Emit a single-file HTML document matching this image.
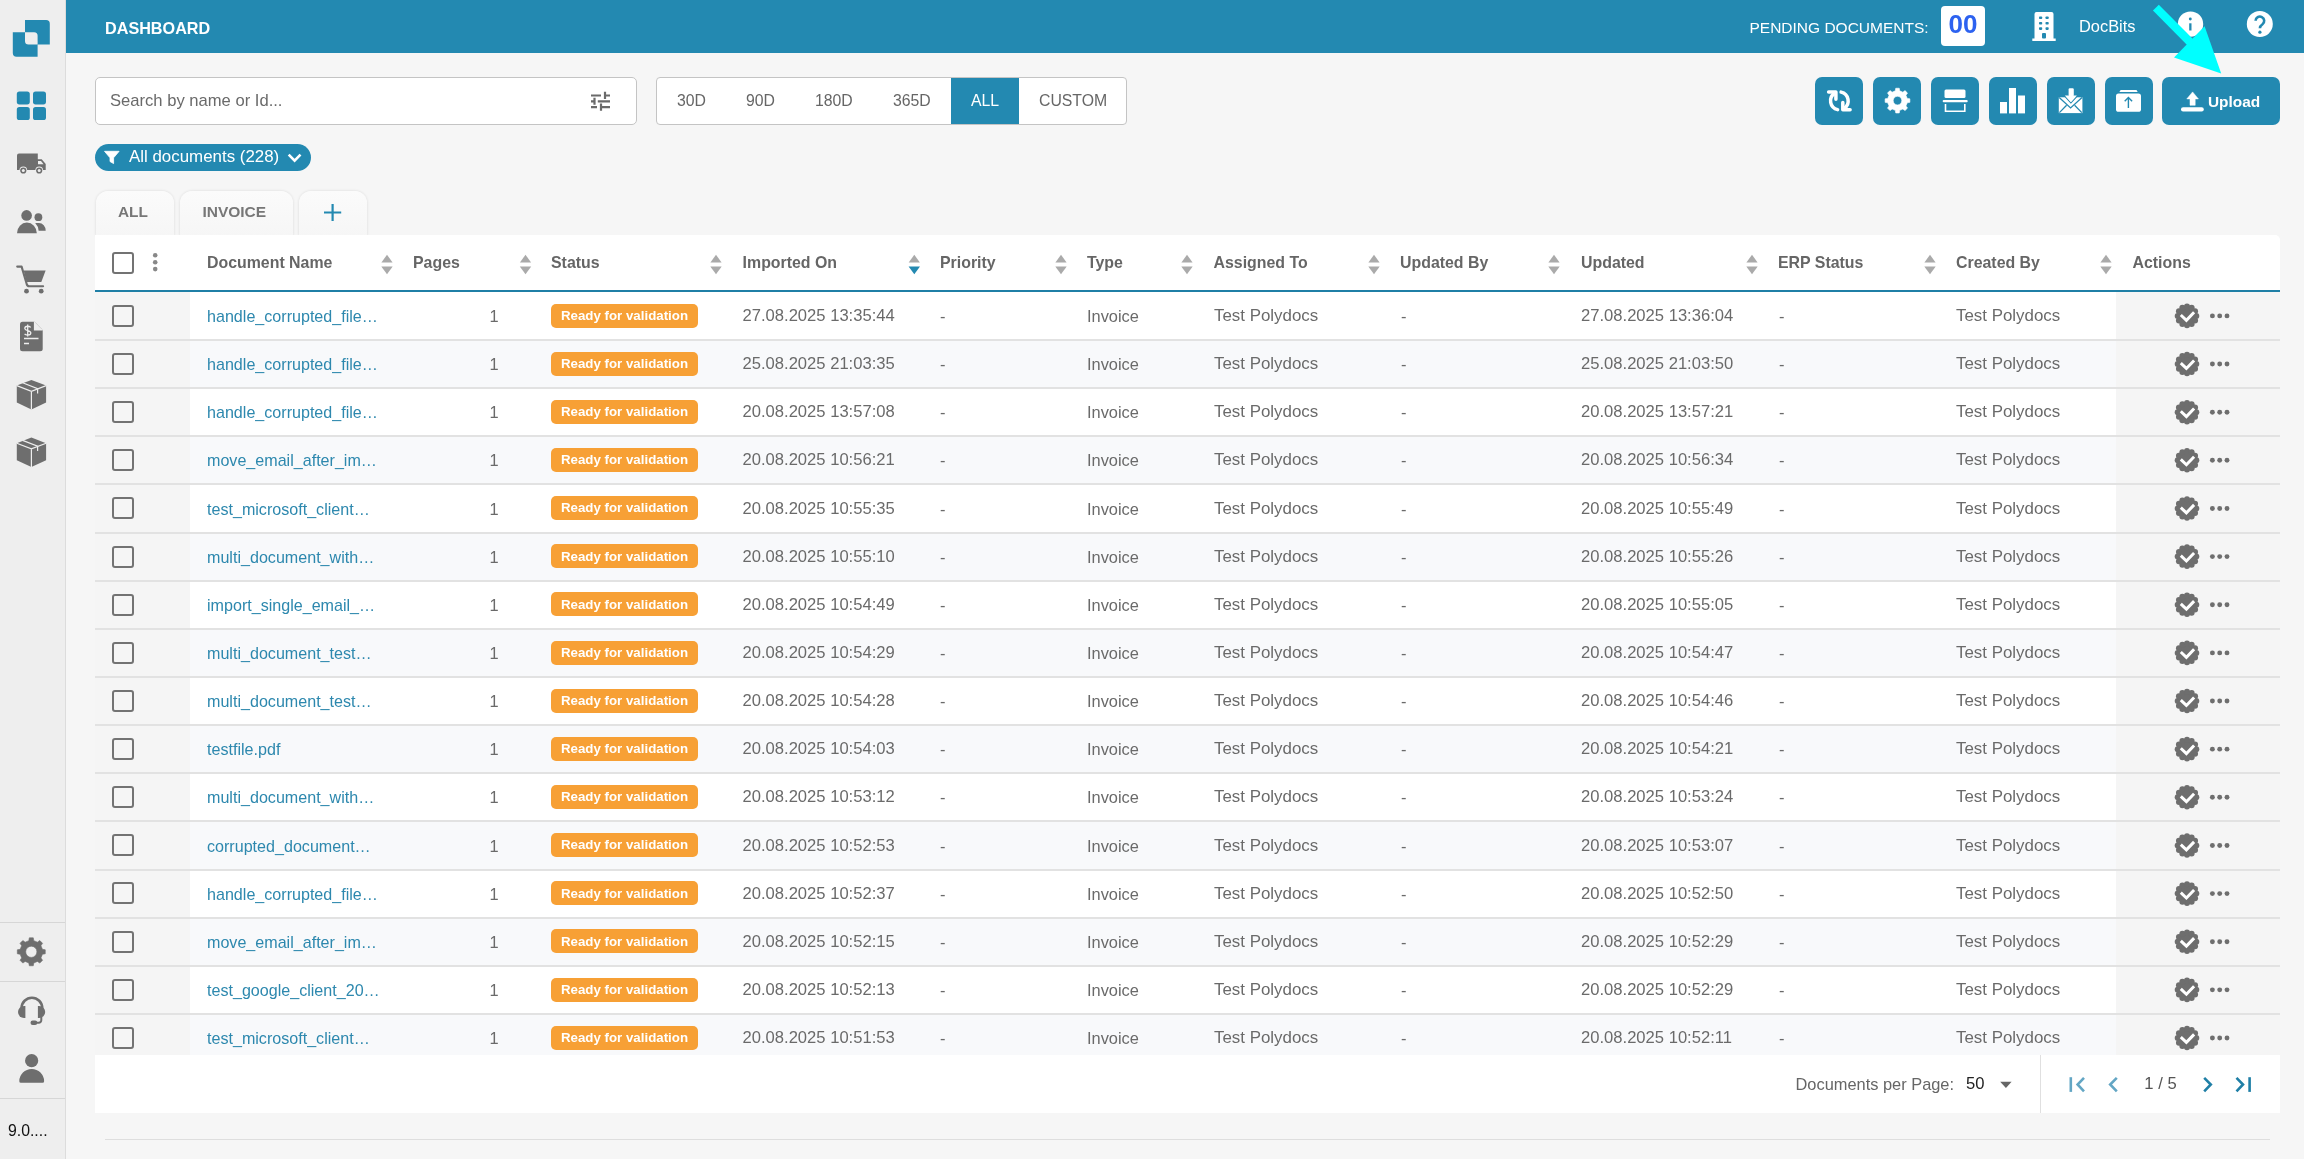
<!DOCTYPE html>
<html><head><meta charset="utf-8"><title>Dashboard</title>
<style>
html,body{margin:0;padding:0;}
body{width:2304px;height:1159px;overflow:hidden;position:relative;background:#f6f6f6;font-family:"Liberation Sans", sans-serif;}
.t{position:absolute;white-space:nowrap;line-height:40px;height:40px;}
svg{position:absolute;left:0;top:0;overflow:visible;}
</style></head><body>
<div style="position:absolute;left:0px;top:0px;width:65px;height:1159px;background:#eeeeee;"></div>
<div style="position:absolute;left:65px;top:0px;width:1px;height:1159px;background:#dcdcdc;"></div>
<div style="position:absolute;left:0px;top:922px;width:65px;height:1.3px;background:#d6d6d6;"></div>
<div style="position:absolute;left:0px;top:981px;width:65px;height:1.3px;background:#d6d6d6;"></div>
<div style="position:absolute;left:0px;top:1098px;width:65px;height:1.3px;background:#d6d6d6;"></div>
<div style="position:absolute;left:66px;top:0px;width:2238px;height:53px;background:#2389b1;"></div>
<div style="position:absolute;left:1941px;top:6px;width:44px;height:40px;background:#fff;border-radius:4px;"></div>
<div style="position:absolute;left:95px;top:77px;width:540px;height:46px;background:#fff;border:1px solid #c4c4c4;border-radius:5px;"></div>
<div style="position:absolute;left:656px;top:77px;width:469px;height:46px;background:#fff;border:1px solid #c4c4c4;border-radius:4px;"></div>
<div style="position:absolute;left:951px;top:78px;width:68px;height:46px;background:#2389b1;"></div>
<div style="position:absolute;left:1815px;top:77px;width:48px;height:48px;background:#2389b1;border-radius:7px;"></div>
<div style="position:absolute;left:1873px;top:77px;width:48px;height:48px;background:#2389b1;border-radius:7px;"></div>
<div style="position:absolute;left:1931px;top:77px;width:48px;height:48px;background:#2389b1;border-radius:7px;"></div>
<div style="position:absolute;left:1989px;top:77px;width:48px;height:48px;background:#2389b1;border-radius:7px;"></div>
<div style="position:absolute;left:2047px;top:77px;width:48px;height:48px;background:#2389b1;border-radius:7px;"></div>
<div style="position:absolute;left:2105px;top:77px;width:48px;height:48px;background:#2389b1;border-radius:7px;"></div>
<div style="position:absolute;left:2162px;top:77px;width:118px;height:48px;background:#2389b1;border-radius:7px;"></div>
<div style="position:absolute;left:95px;top:144px;width:216px;height:27px;background:#2389b1;border-radius:14px;"></div>
<div style="position:absolute;left:96px;top:191px;width:78px;height:45px;background:linear-gradient(#fbfbfb,#f6f6f6);border-radius:12px 12px 0 0;box-shadow:0 0 3px rgba(0,0,0,0.12);"></div>
<div style="position:absolute;left:180px;top:191px;width:113px;height:45px;background:linear-gradient(#fbfbfb,#f6f6f6);border-radius:12px 12px 0 0;box-shadow:0 0 3px rgba(0,0,0,0.12);"></div>
<div style="position:absolute;left:299px;top:191px;width:68px;height:45px;background:linear-gradient(#fbfbfb,#f6f6f6);border-radius:12px 12px 0 0;box-shadow:0 0 3px rgba(0,0,0,0.12);"></div>
<div style="position:absolute;left:95px;top:235px;width:2185px;height:820px;background:#fff;border-radius:0 5px 0 0;"></div>
<div style="position:absolute;left:95px;top:290px;width:2185px;height:2.2px;background:#1f7fa6;"></div>
<div style="position:absolute;left:112px;top:251.5px;width:18px;height:18px;background:transparent;border:2px solid #737373;border-radius:3px;"></div>
<div style="position:absolute;left:95px;top:292px;width:2185px;height:47px;background:#ffffff;"></div>
<div style="position:absolute;left:95px;top:292px;width:95px;height:47px;background:#f5f5f5;"></div>
<div style="position:absolute;left:2116px;top:292px;width:164px;height:47px;background:#f5f5f5;"></div>
<div style="position:absolute;left:95px;top:339px;width:2185px;height:2px;background:#e2e2e2;"></div>
<div style="position:absolute;left:112px;top:304.8px;width:18px;height:18px;background:transparent;border:2px solid #737373;border-radius:3px;"></div>
<div style="position:absolute;left:551px;top:303.6px;width:147px;height:24px;background:#f7a035;border-radius:5px;"></div>
<div style="position:absolute;left:95px;top:341px;width:2185px;height:46px;background:#f8f9fb;"></div>
<div style="position:absolute;left:95px;top:341px;width:95px;height:46px;background:#f5f5f5;"></div>
<div style="position:absolute;left:2116px;top:341px;width:164px;height:46px;background:#f5f5f5;"></div>
<div style="position:absolute;left:95px;top:387px;width:2185px;height:2px;background:#e2e2e2;"></div>
<div style="position:absolute;left:112px;top:352.94px;width:18px;height:18px;background:transparent;border:2px solid #737373;border-radius:3px;"></div>
<div style="position:absolute;left:551px;top:351.74px;width:147px;height:24px;background:#f7a035;border-radius:5px;"></div>
<div style="position:absolute;left:95px;top:389px;width:2185px;height:46px;background:#ffffff;"></div>
<div style="position:absolute;left:95px;top:389px;width:95px;height:46px;background:#f5f5f5;"></div>
<div style="position:absolute;left:2116px;top:389px;width:164px;height:46px;background:#f5f5f5;"></div>
<div style="position:absolute;left:95px;top:435px;width:2185px;height:2px;background:#e2e2e2;"></div>
<div style="position:absolute;left:112px;top:401.08px;width:18px;height:18px;background:transparent;border:2px solid #737373;border-radius:3px;"></div>
<div style="position:absolute;left:551px;top:399.88px;width:147px;height:24px;background:#f7a035;border-radius:5px;"></div>
<div style="position:absolute;left:95px;top:437px;width:2185px;height:46px;background:#f8f9fb;"></div>
<div style="position:absolute;left:95px;top:437px;width:95px;height:46px;background:#f5f5f5;"></div>
<div style="position:absolute;left:2116px;top:437px;width:164px;height:46px;background:#f5f5f5;"></div>
<div style="position:absolute;left:95px;top:483px;width:2185px;height:2px;background:#e2e2e2;"></div>
<div style="position:absolute;left:112px;top:449.22px;width:18px;height:18px;background:transparent;border:2px solid #737373;border-radius:3px;"></div>
<div style="position:absolute;left:551px;top:448.02px;width:147px;height:24px;background:#f7a035;border-radius:5px;"></div>
<div style="position:absolute;left:95px;top:485px;width:2185px;height:47px;background:#ffffff;"></div>
<div style="position:absolute;left:95px;top:485px;width:95px;height:47px;background:#f5f5f5;"></div>
<div style="position:absolute;left:2116px;top:485px;width:164px;height:47px;background:#f5f5f5;"></div>
<div style="position:absolute;left:95px;top:532px;width:2185px;height:2px;background:#e2e2e2;"></div>
<div style="position:absolute;left:112px;top:497.36px;width:18px;height:18px;background:transparent;border:2px solid #737373;border-radius:3px;"></div>
<div style="position:absolute;left:551px;top:496.16px;width:147px;height:24px;background:#f7a035;border-radius:5px;"></div>
<div style="position:absolute;left:95px;top:534px;width:2185px;height:46px;background:#f8f9fb;"></div>
<div style="position:absolute;left:95px;top:534px;width:95px;height:46px;background:#f5f5f5;"></div>
<div style="position:absolute;left:2116px;top:534px;width:164px;height:46px;background:#f5f5f5;"></div>
<div style="position:absolute;left:95px;top:580px;width:2185px;height:2px;background:#e2e2e2;"></div>
<div style="position:absolute;left:112px;top:545.5px;width:18px;height:18px;background:transparent;border:2px solid #737373;border-radius:3px;"></div>
<div style="position:absolute;left:551px;top:544.3px;width:147px;height:24px;background:#f7a035;border-radius:5px;"></div>
<div style="position:absolute;left:95px;top:582px;width:2185px;height:46px;background:#ffffff;"></div>
<div style="position:absolute;left:95px;top:582px;width:95px;height:46px;background:#f5f5f5;"></div>
<div style="position:absolute;left:2116px;top:582px;width:164px;height:46px;background:#f5f5f5;"></div>
<div style="position:absolute;left:95px;top:628px;width:2185px;height:2px;background:#e2e2e2;"></div>
<div style="position:absolute;left:112px;top:593.64px;width:18px;height:18px;background:transparent;border:2px solid #737373;border-radius:3px;"></div>
<div style="position:absolute;left:551px;top:592.44px;width:147px;height:24px;background:#f7a035;border-radius:5px;"></div>
<div style="position:absolute;left:95px;top:630px;width:2185px;height:46px;background:#f8f9fb;"></div>
<div style="position:absolute;left:95px;top:630px;width:95px;height:46px;background:#f5f5f5;"></div>
<div style="position:absolute;left:2116px;top:630px;width:164px;height:46px;background:#f5f5f5;"></div>
<div style="position:absolute;left:95px;top:676px;width:2185px;height:2px;background:#e2e2e2;"></div>
<div style="position:absolute;left:112px;top:641.78px;width:18px;height:18px;background:transparent;border:2px solid #737373;border-radius:3px;"></div>
<div style="position:absolute;left:551px;top:640.58px;width:147px;height:24px;background:#f7a035;border-radius:5px;"></div>
<div style="position:absolute;left:95px;top:678px;width:2185px;height:46px;background:#ffffff;"></div>
<div style="position:absolute;left:95px;top:678px;width:95px;height:46px;background:#f5f5f5;"></div>
<div style="position:absolute;left:2116px;top:678px;width:164px;height:46px;background:#f5f5f5;"></div>
<div style="position:absolute;left:95px;top:724px;width:2185px;height:2px;background:#e2e2e2;"></div>
<div style="position:absolute;left:112px;top:689.92px;width:18px;height:18px;background:transparent;border:2px solid #737373;border-radius:3px;"></div>
<div style="position:absolute;left:551px;top:688.72px;width:147px;height:24px;background:#f7a035;border-radius:5px;"></div>
<div style="position:absolute;left:95px;top:726px;width:2185px;height:46px;background:#f8f9fb;"></div>
<div style="position:absolute;left:95px;top:726px;width:95px;height:46px;background:#f5f5f5;"></div>
<div style="position:absolute;left:2116px;top:726px;width:164px;height:46px;background:#f5f5f5;"></div>
<div style="position:absolute;left:95px;top:772px;width:2185px;height:2px;background:#e2e2e2;"></div>
<div style="position:absolute;left:112px;top:738.06px;width:18px;height:18px;background:transparent;border:2px solid #737373;border-radius:3px;"></div>
<div style="position:absolute;left:551px;top:736.86px;width:147px;height:24px;background:#f7a035;border-radius:5px;"></div>
<div style="position:absolute;left:95px;top:774px;width:2185px;height:46px;background:#ffffff;"></div>
<div style="position:absolute;left:95px;top:774px;width:95px;height:46px;background:#f5f5f5;"></div>
<div style="position:absolute;left:2116px;top:774px;width:164px;height:46px;background:#f5f5f5;"></div>
<div style="position:absolute;left:95px;top:820px;width:2185px;height:2px;background:#e2e2e2;"></div>
<div style="position:absolute;left:112px;top:786.2px;width:18px;height:18px;background:transparent;border:2px solid #737373;border-radius:3px;"></div>
<div style="position:absolute;left:551px;top:785.0px;width:147px;height:24px;background:#f7a035;border-radius:5px;"></div>
<div style="position:absolute;left:95px;top:822px;width:2185px;height:47px;background:#f8f9fb;"></div>
<div style="position:absolute;left:95px;top:822px;width:95px;height:47px;background:#f5f5f5;"></div>
<div style="position:absolute;left:2116px;top:822px;width:164px;height:47px;background:#f5f5f5;"></div>
<div style="position:absolute;left:95px;top:869px;width:2185px;height:2px;background:#e2e2e2;"></div>
<div style="position:absolute;left:112px;top:834.34px;width:18px;height:18px;background:transparent;border:2px solid #737373;border-radius:3px;"></div>
<div style="position:absolute;left:551px;top:833.14px;width:147px;height:24px;background:#f7a035;border-radius:5px;"></div>
<div style="position:absolute;left:95px;top:871px;width:2185px;height:46px;background:#ffffff;"></div>
<div style="position:absolute;left:95px;top:871px;width:95px;height:46px;background:#f5f5f5;"></div>
<div style="position:absolute;left:2116px;top:871px;width:164px;height:46px;background:#f5f5f5;"></div>
<div style="position:absolute;left:95px;top:917px;width:2185px;height:2px;background:#e2e2e2;"></div>
<div style="position:absolute;left:112px;top:882.48px;width:18px;height:18px;background:transparent;border:2px solid #737373;border-radius:3px;"></div>
<div style="position:absolute;left:551px;top:881.28px;width:147px;height:24px;background:#f7a035;border-radius:5px;"></div>
<div style="position:absolute;left:95px;top:919px;width:2185px;height:46px;background:#f8f9fb;"></div>
<div style="position:absolute;left:95px;top:919px;width:95px;height:46px;background:#f5f5f5;"></div>
<div style="position:absolute;left:2116px;top:919px;width:164px;height:46px;background:#f5f5f5;"></div>
<div style="position:absolute;left:95px;top:965px;width:2185px;height:2px;background:#e2e2e2;"></div>
<div style="position:absolute;left:112px;top:930.62px;width:18px;height:18px;background:transparent;border:2px solid #737373;border-radius:3px;"></div>
<div style="position:absolute;left:551px;top:929.42px;width:147px;height:24px;background:#f7a035;border-radius:5px;"></div>
<div style="position:absolute;left:95px;top:967px;width:2185px;height:46px;background:#ffffff;"></div>
<div style="position:absolute;left:95px;top:967px;width:95px;height:46px;background:#f5f5f5;"></div>
<div style="position:absolute;left:2116px;top:967px;width:164px;height:46px;background:#f5f5f5;"></div>
<div style="position:absolute;left:95px;top:1013px;width:2185px;height:2px;background:#e2e2e2;"></div>
<div style="position:absolute;left:112px;top:978.76px;width:18px;height:18px;background:transparent;border:2px solid #737373;border-radius:3px;"></div>
<div style="position:absolute;left:551px;top:977.56px;width:147px;height:24px;background:#f7a035;border-radius:5px;"></div>
<div style="position:absolute;left:95px;top:1015px;width:2185px;height:40px;background:#f8f9fb;"></div>
<div style="position:absolute;left:95px;top:1015px;width:95px;height:40px;background:#f5f5f5;"></div>
<div style="position:absolute;left:2116px;top:1015px;width:164px;height:40px;background:#f5f5f5;"></div>
<div style="position:absolute;left:112px;top:1026.9px;width:18px;height:18px;background:transparent;border:2px solid #737373;border-radius:3px;"></div>
<div style="position:absolute;left:551px;top:1025.7px;width:147px;height:24px;background:#f7a035;border-radius:5px;"></div>
<div style="position:absolute;left:95px;top:1055px;width:2185px;height:58px;background:#fff;"></div>
<div style="position:absolute;left:2040px;top:1055px;width:1.2px;height:58px;background:#e0e0e0;"></div>
<div style="position:absolute;left:105px;top:1138.5px;width:2165px;height:1.5px;background:#dedede;"></div>
<svg width="2304" height="1159" viewBox="0 0 2304 1159">
<path d="M25,20 H46.1 A3.7,3.7 0 0 1 49.8,23.7 V44.6 H25 Z" fill="#2389b1" />
<path d="M12.8,32.2 H37.6 V56.7 H16.5 A3.7,3.7 0 0 1 12.8,53 Z" fill="#2389b1" />
<path d="M25,32.2 H34.1 A3.5,3.5 0 0 1 37.6,35.7 V44.6 H28.5 A3.5,3.5 0 0 1 25,41.1 Z" fill="#eeeeee" />
<rect x="16.8" y="91.4" width="13" height="13" rx="2.6" fill="#2389b1"/>
<rect x="33" y="91.4" width="13" height="13" rx="2.6" fill="#2389b1"/>
<rect x="16.8" y="107.1" width="13" height="13" rx="2.6" fill="#2389b1"/>
<rect x="33" y="107.1" width="13" height="13" rx="2.6" fill="#2389b1"/>
<path d="M19,153.5 H37.8 V159.2 H41.7 L45.7,164 V170.1 H17 V155.5 A2,2 0 0 1 19,153.5 Z" fill="#6e6e6e" />
<path d="M38,161 H41 L43.5,164.2 H38 Z" fill="#eeeeee" />
<circle cx="23.3" cy="170.5" r="3.9" fill="#eeeeee"/>
<circle cx="23.3" cy="170.5" r="3.1" fill="#6e6e6e"/>
<circle cx="23.3" cy="170.5" r="1.5" fill="#eeeeee"/>
<circle cx="39.2" cy="170.5" r="3.9" fill="#eeeeee"/>
<circle cx="39.2" cy="170.5" r="3.1" fill="#6e6e6e"/>
<circle cx="39.2" cy="170.5" r="1.5" fill="#eeeeee"/>
<circle cx="26.6" cy="215.4" r="5.3" fill="#6e6e6e"/>
<path d="M17,233.2 A9.9,10.7 0 0 1 36.8,233.2 Z" fill="#6e6e6e" />
<circle cx="38.4" cy="217.2" r="3.9" fill="#6e6e6e"/>
<path d="M35.2,223 H39 A6.7,7.7 0 0 1 45.7,230.7 H38.6 A12,12 0 0 0 35.2,223 Z" fill="#6e6e6e" />
<path d="M17.2,266.6 H21.6 L26.7,284 Q27,286.2 29.5,286.2 H43.1" fill="none" stroke="#6e6e6e" stroke-width="2.1" stroke-linecap="round" stroke-linejoin="round"/>
<path d="M23.7,270.4 H45.6 L41.3,282.1 H26.5 Z" fill="#6e6e6e" />
<circle cx="26.5" cy="291.2" r="2.4" fill="#6e6e6e"/>
<circle cx="41.2" cy="291.2" r="2.4" fill="#6e6e6e"/>
<path d="M22.5,321.7 H34.5 L42.7,329.9 V348.7 A2.5,2.5 0 0 1 40.2,351.2 H22.5 A2.5,2.5 0 0 1 20,348.7 V324.2 A2.5,2.5 0 0 1 22.5,321.7 Z" fill="#6e6e6e" />
<path d="M34.5,321.7 V329.9 H42.7" fill="#eeeeee" stroke="#eeeeee" stroke-width="1.2" />
<path d="M24,338.5 H38.5 M24,343.5 H29" fill="none" stroke="#eeeeee" stroke-width="1.4" />
<path d="M30.6,327.4 C30,325.8 24.8,325.6 24.8,328.4 C24.8,331 30.8,330.2 30.8,333 C30.8,335.6 25.6,335.4 24.6,333.8 M27.7,324.4 V336.6" fill="none" stroke="#eeeeee" stroke-width="1.3" />
<path d="M31.4,380.0 L46.1,385.6 V402.6 L31.4,409.4 L16.8,402.6 V385.6 Z" fill="#6e6e6e" />
<path d="M16.8,385.6 L31.4,391.3 L46.1,385.6 M31.4,391.3 V409.4" fill="none" stroke="#eeeeee" stroke-width="1.2" />
<path d="M22.6,382.8 L37.6,388.6 V393.5" fill="none" stroke="#eeeeee" stroke-width="1.2" />
<path d="M31.4,437.6 L46.1,443.20000000000005 V460.20000000000005 L31.4,467.0 L16.8,460.20000000000005 V443.20000000000005 Z" fill="#6e6e6e" />
<path d="M16.8,443.20000000000005 L31.4,448.90000000000003 L46.1,443.20000000000005 M31.4,448.90000000000003 V467.0" fill="none" stroke="#eeeeee" stroke-width="1.2" />
<path d="M22.6,440.40000000000003 L37.6,446.20000000000005 V451.1" fill="none" stroke="#eeeeee" stroke-width="1.2" />
<path d="M28.81,940.67 L29.31,937.84 L33.29,937.84 L33.79,940.67 L37.41,942.17 L39.77,940.52 L42.58,943.33 L40.93,945.69 L42.43,949.31 L45.26,949.81 L45.26,953.79 L42.43,954.29 L40.93,957.91 L42.58,960.27 L39.77,963.08 L37.41,961.43 L33.79,962.93 L33.29,965.76 L29.31,965.76 L28.81,962.93 L25.19,961.43 L22.83,963.08 L20.02,960.27 L21.67,957.91 L20.17,954.29 L17.34,953.79 L17.34,949.81 L20.17,949.31 L21.67,945.69 L20.02,943.33 L22.83,940.52 L25.19,942.17 Z M36.90,951.80 A5.6,5.6 0 1 0 25.70,951.80 A5.6,5.6 0 1 0 36.90,951.80 Z" fill="#6e6e6e" fill-rule="evenodd" stroke="#6e6e6e" stroke-width="0.6" stroke-linejoin="round"/>
<path d="M21.6,1011 V1008 A10.3,10.3 0 0 1 42.2,1008 V1011" fill="none" stroke="#6e6e6e" stroke-width="2.6" />
<path d="M25.4,1006 V1018 H24 A6,6 0 0 1 18,1012 A6,6 0 0 1 24,1006 Z" fill="#6e6e6e" />
<path d="M37.9,1006 V1018 H39.2 A6,6 0 0 0 45.2,1012 A6,6 0 0 0 39.2,1006 Z" fill="#6e6e6e" />
<path d="M41.3,1017 V1020.3 A2.5,2.5 0 0 1 38.8,1022.8 H35" fill="none" stroke="#6e6e6e" stroke-width="2" />
<rect x="30.5" y="1020.6" width="6.8" height="4.4" rx="2.2" fill="#6e6e6e"/>
<circle cx="31.65" cy="1060.7" r="6.6" fill="#6e6e6e"/>
<path d="M19.3,1081.2 A12.4,12.2 0 0 1 44.1,1081.2 A1.5,1.5 0 0 1 42.6,1082.7 H20.8 A1.5,1.5 0 0 1 19.3,1081.2 Z" fill="#6e6e6e" />
<path d="M2034.5,14.1 A2,2 0 0 1 2036.5,12.1 H2051.5 A2,2 0 0 1 2053.5,14.1 V38.5 H2055.7 V41.1 H2032.3 V38.5 H2034.5 Z" fill="#fff" />
<rect x="2039.0" y="16.5" width="3.2" height="2.6" rx="0.8" fill="#2389b1"/>
<rect x="2045.5" y="16.5" width="3.2" height="2.6" rx="0.8" fill="#2389b1"/>
<rect x="2039.0" y="21.9" width="3.2" height="2.6" rx="0.8" fill="#2389b1"/>
<rect x="2045.5" y="21.9" width="3.2" height="2.6" rx="0.8" fill="#2389b1"/>
<rect x="2039.0" y="27.3" width="3.2" height="2.6" rx="0.8" fill="#2389b1"/>
<rect x="2045.5" y="27.3" width="3.2" height="2.6" rx="0.8" fill="#2389b1"/>
<rect x="2042" y="33" width="4" height="5.6" rx="1" fill="#2389b1"/>
<circle cx="2190.5" cy="24.1" r="12.7" fill="#fff"/>
<circle cx="2190.3" cy="19" r="1.45" fill="#2389b1"/>
<rect x="2189.2" y="23.3" width="2.3" height="7.2" fill="#2389b1"/>
<circle cx="2259.8" cy="24" r="13" fill="#fff"/>
<path d="M2255.6,20.8 A4.3,4.3 0 1 1 2262.5,24.3 C2260.6,25.6 2259.9,26.3 2259.9,28.3" fill="none" stroke="#2389b1" stroke-width="2.6" stroke-linecap="butt"/>
<circle cx="2259.9" cy="32.2" r="1.6" fill="#2389b1"/>
<path d="M591,95.5 H601 M605,95.5 H610 M605,91.8 V99 M591,101.3 H594.5 M597.8,101.3 H610 M594.5,97.8 V104.8 M591,107.2 H597 M601,107.2 H610 M601,103.6 V110.8" fill="none" stroke="#6a6a6a" stroke-width="2.2" />
<g fill="none" stroke="#fff" stroke-width="3.5" stroke-linecap="round" stroke-linejoin="round"><path d="M1828.6,92 H1835.9 V99.3"/><path d="M1834.6,93.3 A9,9 0 0 0 1837.6,109.6"/><g transform="rotate(180 1839.35 100.85)"><path d="M1828.6,92 H1835.9 V99.3"/><path d="M1834.6,93.3 A9,9 0 0 0 1837.6,109.6"/></g></g>
<path d="M1895.32,90.84 L1895.74,88.22 L1899.26,88.22 L1899.68,90.84 L1902.86,92.16 L1905.01,90.60 L1907.50,93.09 L1905.94,95.24 L1907.26,98.42 L1909.88,98.84 L1909.88,102.36 L1907.26,102.78 L1905.94,105.96 L1907.50,108.11 L1905.01,110.60 L1902.86,109.04 L1899.68,110.36 L1899.26,112.98 L1895.74,112.98 L1895.32,110.36 L1892.14,109.04 L1889.99,110.60 L1887.50,108.11 L1889.06,105.96 L1887.74,102.78 L1885.12,102.36 L1885.12,98.84 L1887.74,98.42 L1889.06,95.24 L1887.50,93.09 L1889.99,90.60 L1892.14,92.16 Z M1901.80,100.60 A4.3,4.3 0 1 0 1893.20,100.60 A4.3,4.3 0 1 0 1901.80,100.60 Z" fill="#fff" fill-rule="evenodd" stroke="#fff" stroke-width="0.6" stroke-linejoin="round"/>
<rect x="1944.5" y="89.5" width="21" height="8.5" rx="1.5" fill="#fff"/>
<rect x="1942.7" y="100" width="25" height="2.2" rx="1" fill="#fff"/>
<path d="M1945.5,104 V111.2 H1964.8 V104" fill="none" stroke="#fff" stroke-width="1.6" />
<rect x="2000" y="102" width="7" height="11.4" fill="#fff"/>
<rect x="2009" y="88" width="7" height="25.4" fill="#fff"/>
<rect x="2018" y="95.5" width="7" height="17.9" fill="#fff"/>
<rect x="2058.8" y="97.3" width="23.6" height="15.8" fill="#fff"/>
<path d="M2058.8,97.3 L2064.5,97.3 L2070.6,103 L2076.8,97.3 L2082.4,97.3 Z" fill="#fff" />
<path d="M2059.2,97.6 L2070.6,107.9 L2082,97.6" fill="none" stroke="#2389b1" stroke-width="1.3" />
<path d="M2059.4,112.6 L2066.6,105.3 M2081.8,112.6 L2074.6,105.3" fill="none" stroke="#2389b1" stroke-width="1.3" />
<path d="M2064.2,95.6 L2070.9,102.9 L2077.6,95.6" fill="none" stroke="#2389b1" stroke-width="1.3" />
<rect x="2068.6" y="88.3" width="5.2" height="8" rx="1.2" fill="#fff"/>
<path d="M2064.8,95.5 H2076.9 L2070.9,102.2 Z" fill="#fff" />
<path d="M2119.4,92 L2120.6,90 H2136.5 L2137.7,92 Z" fill="#fff" />
<rect x="2116" y="93.4" width="25" height="18.4" rx="2.6" fill="#fff"/>
<path d="M2128.4,108 V97.6 M2124.7,101.2 L2128.4,97.4 L2132.1,101.2" fill="none" stroke="#2389b1" stroke-width="1.4" />
<path d="M2192.6,91.9 L2198.4,98.9 H2195.2 V105.3 H2190 V98.9 H2186.8 Z" fill="#fff" stroke="#fff" stroke-width="0.5" stroke-linejoin="round"/>
<rect x="2181" y="107.2" width="22.8" height="4.3" rx="2.1" fill="#fff"/>
<path d="M104.5,151.3 H119.1 L113.6,157.8 V163.6 L110,161.5 V157.8 Z" fill="#fff" stroke="#fff" stroke-width="0.8" stroke-linejoin="round"/>
<path d="M288.7,154.6 L294.6,160.6 L300.5,154.6" fill="none" stroke="#fff" stroke-width="2.6" />
<path d="M332.6,204 V221 M324,212.5 H341.2" fill="none" stroke="#2389b1" stroke-width="2.2" />
<circle cx="155.2" cy="255.3" r="2.3" fill="#888"/>
<circle cx="155.2" cy="262.2" r="2.3" fill="#888"/>
<circle cx="155.2" cy="269.1" r="2.3" fill="#888"/>
<path d="M387,254.8 L392.6,262.4 H381.4 Z" fill="#aaaaaa" />
<path d="M381.3,266.5 H392.7 L387,274.3 Z" fill="#aaaaaa" />
<path d="M525.5,254.8 L531.1,262.4 H519.9 Z" fill="#aaaaaa" />
<path d="M519.8,266.5 H531.2 L525.5,274.3 Z" fill="#aaaaaa" />
<path d="M716,254.8 L721.6,262.4 H710.4 Z" fill="#aaaaaa" />
<path d="M710.3,266.5 H721.7 L716,274.3 Z" fill="#aaaaaa" />
<path d="M914.3,254.8 L919.9,262.4 H908.6999999999999 Z" fill="#aaaaaa" />
<path d="M908.5999999999999,266.5 H920.0 L914.3,274.3 Z" fill="#2389b1" />
<path d="M1061,254.8 L1066.6,262.4 H1055.4 Z" fill="#aaaaaa" />
<path d="M1055.3,266.5 H1066.7 L1061,274.3 Z" fill="#aaaaaa" />
<path d="M1187,254.8 L1192.6,262.4 H1181.4 Z" fill="#aaaaaa" />
<path d="M1181.3,266.5 H1192.7 L1187,274.3 Z" fill="#aaaaaa" />
<path d="M1374,254.8 L1379.6,262.4 H1368.4 Z" fill="#aaaaaa" />
<path d="M1368.3,266.5 H1379.7 L1374,274.3 Z" fill="#aaaaaa" />
<path d="M1554,254.8 L1559.6,262.4 H1548.4 Z" fill="#aaaaaa" />
<path d="M1548.3,266.5 H1559.7 L1554,274.3 Z" fill="#aaaaaa" />
<path d="M1752,254.8 L1757.6,262.4 H1746.4 Z" fill="#aaaaaa" />
<path d="M1746.3,266.5 H1757.7 L1752,274.3 Z" fill="#aaaaaa" />
<path d="M1930,254.8 L1935.6,262.4 H1924.4 Z" fill="#aaaaaa" />
<path d="M1924.3,266.5 H1935.7 L1930,274.3 Z" fill="#aaaaaa" />
<path d="M2106,254.8 L2111.6,262.4 H2100.4 Z" fill="#aaaaaa" />
<path d="M2100.3,266.5 H2111.7 L2106,274.3 Z" fill="#aaaaaa" />
<g transform="translate(0,0.00)"><g fill="#6e6e6e"><circle cx="2187" cy="315.9" r="10.2"/><circle cx="2196.30" cy="315.90" r="3"/><circle cx="2195.05" cy="320.55" r="3"/><circle cx="2191.65" cy="323.95" r="3"/><circle cx="2187.00" cy="325.20" r="3"/><circle cx="2182.35" cy="323.95" r="3"/><circle cx="2178.95" cy="320.55" r="3"/><circle cx="2177.70" cy="315.90" r="3"/><circle cx="2178.95" cy="311.25" r="3"/><circle cx="2182.35" cy="307.85" r="3"/><circle cx="2187.00" cy="306.60" r="3"/><circle cx="2191.65" cy="307.85" r="3"/><circle cx="2195.05" cy="311.25" r="3"/></g><path d="M2180.8,315 L2186.4,320.3 L2194.1,312.3" fill="none" stroke="#fff" stroke-width="3"/><circle cx="2212.4" cy="315.9" r="2.45" fill="#6e6e6e"/><circle cx="2219.7" cy="315.9" r="2.45" fill="#6e6e6e"/><circle cx="2227" cy="315.9" r="2.45" fill="#6e6e6e"/></g>
<g transform="translate(0,48.14)"><g fill="#6e6e6e"><circle cx="2187" cy="315.9" r="10.2"/><circle cx="2196.30" cy="315.90" r="3"/><circle cx="2195.05" cy="320.55" r="3"/><circle cx="2191.65" cy="323.95" r="3"/><circle cx="2187.00" cy="325.20" r="3"/><circle cx="2182.35" cy="323.95" r="3"/><circle cx="2178.95" cy="320.55" r="3"/><circle cx="2177.70" cy="315.90" r="3"/><circle cx="2178.95" cy="311.25" r="3"/><circle cx="2182.35" cy="307.85" r="3"/><circle cx="2187.00" cy="306.60" r="3"/><circle cx="2191.65" cy="307.85" r="3"/><circle cx="2195.05" cy="311.25" r="3"/></g><path d="M2180.8,315 L2186.4,320.3 L2194.1,312.3" fill="none" stroke="#fff" stroke-width="3"/><circle cx="2212.4" cy="315.9" r="2.45" fill="#6e6e6e"/><circle cx="2219.7" cy="315.9" r="2.45" fill="#6e6e6e"/><circle cx="2227" cy="315.9" r="2.45" fill="#6e6e6e"/></g>
<g transform="translate(0,96.28)"><g fill="#6e6e6e"><circle cx="2187" cy="315.9" r="10.2"/><circle cx="2196.30" cy="315.90" r="3"/><circle cx="2195.05" cy="320.55" r="3"/><circle cx="2191.65" cy="323.95" r="3"/><circle cx="2187.00" cy="325.20" r="3"/><circle cx="2182.35" cy="323.95" r="3"/><circle cx="2178.95" cy="320.55" r="3"/><circle cx="2177.70" cy="315.90" r="3"/><circle cx="2178.95" cy="311.25" r="3"/><circle cx="2182.35" cy="307.85" r="3"/><circle cx="2187.00" cy="306.60" r="3"/><circle cx="2191.65" cy="307.85" r="3"/><circle cx="2195.05" cy="311.25" r="3"/></g><path d="M2180.8,315 L2186.4,320.3 L2194.1,312.3" fill="none" stroke="#fff" stroke-width="3"/><circle cx="2212.4" cy="315.9" r="2.45" fill="#6e6e6e"/><circle cx="2219.7" cy="315.9" r="2.45" fill="#6e6e6e"/><circle cx="2227" cy="315.9" r="2.45" fill="#6e6e6e"/></g>
<g transform="translate(0,144.42)"><g fill="#6e6e6e"><circle cx="2187" cy="315.9" r="10.2"/><circle cx="2196.30" cy="315.90" r="3"/><circle cx="2195.05" cy="320.55" r="3"/><circle cx="2191.65" cy="323.95" r="3"/><circle cx="2187.00" cy="325.20" r="3"/><circle cx="2182.35" cy="323.95" r="3"/><circle cx="2178.95" cy="320.55" r="3"/><circle cx="2177.70" cy="315.90" r="3"/><circle cx="2178.95" cy="311.25" r="3"/><circle cx="2182.35" cy="307.85" r="3"/><circle cx="2187.00" cy="306.60" r="3"/><circle cx="2191.65" cy="307.85" r="3"/><circle cx="2195.05" cy="311.25" r="3"/></g><path d="M2180.8,315 L2186.4,320.3 L2194.1,312.3" fill="none" stroke="#fff" stroke-width="3"/><circle cx="2212.4" cy="315.9" r="2.45" fill="#6e6e6e"/><circle cx="2219.7" cy="315.9" r="2.45" fill="#6e6e6e"/><circle cx="2227" cy="315.9" r="2.45" fill="#6e6e6e"/></g>
<g transform="translate(0,192.56)"><g fill="#6e6e6e"><circle cx="2187" cy="315.9" r="10.2"/><circle cx="2196.30" cy="315.90" r="3"/><circle cx="2195.05" cy="320.55" r="3"/><circle cx="2191.65" cy="323.95" r="3"/><circle cx="2187.00" cy="325.20" r="3"/><circle cx="2182.35" cy="323.95" r="3"/><circle cx="2178.95" cy="320.55" r="3"/><circle cx="2177.70" cy="315.90" r="3"/><circle cx="2178.95" cy="311.25" r="3"/><circle cx="2182.35" cy="307.85" r="3"/><circle cx="2187.00" cy="306.60" r="3"/><circle cx="2191.65" cy="307.85" r="3"/><circle cx="2195.05" cy="311.25" r="3"/></g><path d="M2180.8,315 L2186.4,320.3 L2194.1,312.3" fill="none" stroke="#fff" stroke-width="3"/><circle cx="2212.4" cy="315.9" r="2.45" fill="#6e6e6e"/><circle cx="2219.7" cy="315.9" r="2.45" fill="#6e6e6e"/><circle cx="2227" cy="315.9" r="2.45" fill="#6e6e6e"/></g>
<g transform="translate(0,240.70)"><g fill="#6e6e6e"><circle cx="2187" cy="315.9" r="10.2"/><circle cx="2196.30" cy="315.90" r="3"/><circle cx="2195.05" cy="320.55" r="3"/><circle cx="2191.65" cy="323.95" r="3"/><circle cx="2187.00" cy="325.20" r="3"/><circle cx="2182.35" cy="323.95" r="3"/><circle cx="2178.95" cy="320.55" r="3"/><circle cx="2177.70" cy="315.90" r="3"/><circle cx="2178.95" cy="311.25" r="3"/><circle cx="2182.35" cy="307.85" r="3"/><circle cx="2187.00" cy="306.60" r="3"/><circle cx="2191.65" cy="307.85" r="3"/><circle cx="2195.05" cy="311.25" r="3"/></g><path d="M2180.8,315 L2186.4,320.3 L2194.1,312.3" fill="none" stroke="#fff" stroke-width="3"/><circle cx="2212.4" cy="315.9" r="2.45" fill="#6e6e6e"/><circle cx="2219.7" cy="315.9" r="2.45" fill="#6e6e6e"/><circle cx="2227" cy="315.9" r="2.45" fill="#6e6e6e"/></g>
<g transform="translate(0,288.84)"><g fill="#6e6e6e"><circle cx="2187" cy="315.9" r="10.2"/><circle cx="2196.30" cy="315.90" r="3"/><circle cx="2195.05" cy="320.55" r="3"/><circle cx="2191.65" cy="323.95" r="3"/><circle cx="2187.00" cy="325.20" r="3"/><circle cx="2182.35" cy="323.95" r="3"/><circle cx="2178.95" cy="320.55" r="3"/><circle cx="2177.70" cy="315.90" r="3"/><circle cx="2178.95" cy="311.25" r="3"/><circle cx="2182.35" cy="307.85" r="3"/><circle cx="2187.00" cy="306.60" r="3"/><circle cx="2191.65" cy="307.85" r="3"/><circle cx="2195.05" cy="311.25" r="3"/></g><path d="M2180.8,315 L2186.4,320.3 L2194.1,312.3" fill="none" stroke="#fff" stroke-width="3"/><circle cx="2212.4" cy="315.9" r="2.45" fill="#6e6e6e"/><circle cx="2219.7" cy="315.9" r="2.45" fill="#6e6e6e"/><circle cx="2227" cy="315.9" r="2.45" fill="#6e6e6e"/></g>
<g transform="translate(0,336.98)"><g fill="#6e6e6e"><circle cx="2187" cy="315.9" r="10.2"/><circle cx="2196.30" cy="315.90" r="3"/><circle cx="2195.05" cy="320.55" r="3"/><circle cx="2191.65" cy="323.95" r="3"/><circle cx="2187.00" cy="325.20" r="3"/><circle cx="2182.35" cy="323.95" r="3"/><circle cx="2178.95" cy="320.55" r="3"/><circle cx="2177.70" cy="315.90" r="3"/><circle cx="2178.95" cy="311.25" r="3"/><circle cx="2182.35" cy="307.85" r="3"/><circle cx="2187.00" cy="306.60" r="3"/><circle cx="2191.65" cy="307.85" r="3"/><circle cx="2195.05" cy="311.25" r="3"/></g><path d="M2180.8,315 L2186.4,320.3 L2194.1,312.3" fill="none" stroke="#fff" stroke-width="3"/><circle cx="2212.4" cy="315.9" r="2.45" fill="#6e6e6e"/><circle cx="2219.7" cy="315.9" r="2.45" fill="#6e6e6e"/><circle cx="2227" cy="315.9" r="2.45" fill="#6e6e6e"/></g>
<g transform="translate(0,385.12)"><g fill="#6e6e6e"><circle cx="2187" cy="315.9" r="10.2"/><circle cx="2196.30" cy="315.90" r="3"/><circle cx="2195.05" cy="320.55" r="3"/><circle cx="2191.65" cy="323.95" r="3"/><circle cx="2187.00" cy="325.20" r="3"/><circle cx="2182.35" cy="323.95" r="3"/><circle cx="2178.95" cy="320.55" r="3"/><circle cx="2177.70" cy="315.90" r="3"/><circle cx="2178.95" cy="311.25" r="3"/><circle cx="2182.35" cy="307.85" r="3"/><circle cx="2187.00" cy="306.60" r="3"/><circle cx="2191.65" cy="307.85" r="3"/><circle cx="2195.05" cy="311.25" r="3"/></g><path d="M2180.8,315 L2186.4,320.3 L2194.1,312.3" fill="none" stroke="#fff" stroke-width="3"/><circle cx="2212.4" cy="315.9" r="2.45" fill="#6e6e6e"/><circle cx="2219.7" cy="315.9" r="2.45" fill="#6e6e6e"/><circle cx="2227" cy="315.9" r="2.45" fill="#6e6e6e"/></g>
<g transform="translate(0,433.26)"><g fill="#6e6e6e"><circle cx="2187" cy="315.9" r="10.2"/><circle cx="2196.30" cy="315.90" r="3"/><circle cx="2195.05" cy="320.55" r="3"/><circle cx="2191.65" cy="323.95" r="3"/><circle cx="2187.00" cy="325.20" r="3"/><circle cx="2182.35" cy="323.95" r="3"/><circle cx="2178.95" cy="320.55" r="3"/><circle cx="2177.70" cy="315.90" r="3"/><circle cx="2178.95" cy="311.25" r="3"/><circle cx="2182.35" cy="307.85" r="3"/><circle cx="2187.00" cy="306.60" r="3"/><circle cx="2191.65" cy="307.85" r="3"/><circle cx="2195.05" cy="311.25" r="3"/></g><path d="M2180.8,315 L2186.4,320.3 L2194.1,312.3" fill="none" stroke="#fff" stroke-width="3"/><circle cx="2212.4" cy="315.9" r="2.45" fill="#6e6e6e"/><circle cx="2219.7" cy="315.9" r="2.45" fill="#6e6e6e"/><circle cx="2227" cy="315.9" r="2.45" fill="#6e6e6e"/></g>
<g transform="translate(0,481.40)"><g fill="#6e6e6e"><circle cx="2187" cy="315.9" r="10.2"/><circle cx="2196.30" cy="315.90" r="3"/><circle cx="2195.05" cy="320.55" r="3"/><circle cx="2191.65" cy="323.95" r="3"/><circle cx="2187.00" cy="325.20" r="3"/><circle cx="2182.35" cy="323.95" r="3"/><circle cx="2178.95" cy="320.55" r="3"/><circle cx="2177.70" cy="315.90" r="3"/><circle cx="2178.95" cy="311.25" r="3"/><circle cx="2182.35" cy="307.85" r="3"/><circle cx="2187.00" cy="306.60" r="3"/><circle cx="2191.65" cy="307.85" r="3"/><circle cx="2195.05" cy="311.25" r="3"/></g><path d="M2180.8,315 L2186.4,320.3 L2194.1,312.3" fill="none" stroke="#fff" stroke-width="3"/><circle cx="2212.4" cy="315.9" r="2.45" fill="#6e6e6e"/><circle cx="2219.7" cy="315.9" r="2.45" fill="#6e6e6e"/><circle cx="2227" cy="315.9" r="2.45" fill="#6e6e6e"/></g>
<g transform="translate(0,529.54)"><g fill="#6e6e6e"><circle cx="2187" cy="315.9" r="10.2"/><circle cx="2196.30" cy="315.90" r="3"/><circle cx="2195.05" cy="320.55" r="3"/><circle cx="2191.65" cy="323.95" r="3"/><circle cx="2187.00" cy="325.20" r="3"/><circle cx="2182.35" cy="323.95" r="3"/><circle cx="2178.95" cy="320.55" r="3"/><circle cx="2177.70" cy="315.90" r="3"/><circle cx="2178.95" cy="311.25" r="3"/><circle cx="2182.35" cy="307.85" r="3"/><circle cx="2187.00" cy="306.60" r="3"/><circle cx="2191.65" cy="307.85" r="3"/><circle cx="2195.05" cy="311.25" r="3"/></g><path d="M2180.8,315 L2186.4,320.3 L2194.1,312.3" fill="none" stroke="#fff" stroke-width="3"/><circle cx="2212.4" cy="315.9" r="2.45" fill="#6e6e6e"/><circle cx="2219.7" cy="315.9" r="2.45" fill="#6e6e6e"/><circle cx="2227" cy="315.9" r="2.45" fill="#6e6e6e"/></g>
<g transform="translate(0,577.68)"><g fill="#6e6e6e"><circle cx="2187" cy="315.9" r="10.2"/><circle cx="2196.30" cy="315.90" r="3"/><circle cx="2195.05" cy="320.55" r="3"/><circle cx="2191.65" cy="323.95" r="3"/><circle cx="2187.00" cy="325.20" r="3"/><circle cx="2182.35" cy="323.95" r="3"/><circle cx="2178.95" cy="320.55" r="3"/><circle cx="2177.70" cy="315.90" r="3"/><circle cx="2178.95" cy="311.25" r="3"/><circle cx="2182.35" cy="307.85" r="3"/><circle cx="2187.00" cy="306.60" r="3"/><circle cx="2191.65" cy="307.85" r="3"/><circle cx="2195.05" cy="311.25" r="3"/></g><path d="M2180.8,315 L2186.4,320.3 L2194.1,312.3" fill="none" stroke="#fff" stroke-width="3"/><circle cx="2212.4" cy="315.9" r="2.45" fill="#6e6e6e"/><circle cx="2219.7" cy="315.9" r="2.45" fill="#6e6e6e"/><circle cx="2227" cy="315.9" r="2.45" fill="#6e6e6e"/></g>
<g transform="translate(0,625.82)"><g fill="#6e6e6e"><circle cx="2187" cy="315.9" r="10.2"/><circle cx="2196.30" cy="315.90" r="3"/><circle cx="2195.05" cy="320.55" r="3"/><circle cx="2191.65" cy="323.95" r="3"/><circle cx="2187.00" cy="325.20" r="3"/><circle cx="2182.35" cy="323.95" r="3"/><circle cx="2178.95" cy="320.55" r="3"/><circle cx="2177.70" cy="315.90" r="3"/><circle cx="2178.95" cy="311.25" r="3"/><circle cx="2182.35" cy="307.85" r="3"/><circle cx="2187.00" cy="306.60" r="3"/><circle cx="2191.65" cy="307.85" r="3"/><circle cx="2195.05" cy="311.25" r="3"/></g><path d="M2180.8,315 L2186.4,320.3 L2194.1,312.3" fill="none" stroke="#fff" stroke-width="3"/><circle cx="2212.4" cy="315.9" r="2.45" fill="#6e6e6e"/><circle cx="2219.7" cy="315.9" r="2.45" fill="#6e6e6e"/><circle cx="2227" cy="315.9" r="2.45" fill="#6e6e6e"/></g>
<g transform="translate(0,673.96)"><g fill="#6e6e6e"><circle cx="2187" cy="315.9" r="10.2"/><circle cx="2196.30" cy="315.90" r="3"/><circle cx="2195.05" cy="320.55" r="3"/><circle cx="2191.65" cy="323.95" r="3"/><circle cx="2187.00" cy="325.20" r="3"/><circle cx="2182.35" cy="323.95" r="3"/><circle cx="2178.95" cy="320.55" r="3"/><circle cx="2177.70" cy="315.90" r="3"/><circle cx="2178.95" cy="311.25" r="3"/><circle cx="2182.35" cy="307.85" r="3"/><circle cx="2187.00" cy="306.60" r="3"/><circle cx="2191.65" cy="307.85" r="3"/><circle cx="2195.05" cy="311.25" r="3"/></g><path d="M2180.8,315 L2186.4,320.3 L2194.1,312.3" fill="none" stroke="#fff" stroke-width="3"/><circle cx="2212.4" cy="315.9" r="2.45" fill="#6e6e6e"/><circle cx="2219.7" cy="315.9" r="2.45" fill="#6e6e6e"/><circle cx="2227" cy="315.9" r="2.45" fill="#6e6e6e"/></g>
<g transform="translate(0,722.10)"><g fill="#6e6e6e"><circle cx="2187" cy="315.9" r="10.2"/><circle cx="2196.30" cy="315.90" r="3"/><circle cx="2195.05" cy="320.55" r="3"/><circle cx="2191.65" cy="323.95" r="3"/><circle cx="2187.00" cy="325.20" r="3"/><circle cx="2182.35" cy="323.95" r="3"/><circle cx="2178.95" cy="320.55" r="3"/><circle cx="2177.70" cy="315.90" r="3"/><circle cx="2178.95" cy="311.25" r="3"/><circle cx="2182.35" cy="307.85" r="3"/><circle cx="2187.00" cy="306.60" r="3"/><circle cx="2191.65" cy="307.85" r="3"/><circle cx="2195.05" cy="311.25" r="3"/></g><path d="M2180.8,315 L2186.4,320.3 L2194.1,312.3" fill="none" stroke="#fff" stroke-width="3"/><circle cx="2212.4" cy="315.9" r="2.45" fill="#6e6e6e"/><circle cx="2219.7" cy="315.9" r="2.45" fill="#6e6e6e"/><circle cx="2227" cy="315.9" r="2.45" fill="#6e6e6e"/></g>
<path d="M2000.2,1081.8 H2011.6 L2005.9,1087.9 Z" fill="#666" />
<path d="M2070.8,1077.2 V1091.9" fill="none" stroke="#63a6c4" stroke-width="2.6" />
<path d="M2084,1077.8 L2077.6,1084.5 L2084,1091.3" fill="none" stroke="#63a6c4" stroke-width="2.6" />
<path d="M2116.8,1077.8 L2110.2,1084.5 L2116.8,1091.3" fill="none" stroke="#63a6c4" stroke-width="2.6" />
<path d="M2204.2,1077.8 L2210.8,1084.5 L2204.2,1091.3" fill="none" stroke="#1f7fa6" stroke-width="2.6" />
<path d="M2236.5,1077.8 L2243,1084.5 L2236.5,1091.3" fill="none" stroke="#1f7fa6" stroke-width="2.6" />
<path d="M2249.6,1077.2 V1091.9" fill="none" stroke="#1f7fa6" stroke-width="2.6" />
<path d="M2155.9,7.6 L2192,44" fill="none" stroke="#00ffff" stroke-width="8.3" />
<path d="M2174,57.4 L2204.6,26.2 L2221.2,73.4 Z" fill="#00ffff" />
</svg>
<div style="position:absolute;left:0;top:0;width:2304px;height:1159px;will-change:transform;">
<div class="t" style="left:8px;top:1110.50px;font-size:15.8px;font-weight:400;color:#111;">9.0....</div>
<div class="t" style="left:105px;top:7.75px;font-size:16.2px;font-weight:700;color:#fff;">DASHBOARD</div>
<div class="t" style="left:1749.5px;top:7.80px;font-size:15.5px;font-weight:400;color:#fff;">PENDING DOCUMENTS:</div>
<div class="t" style="left:1963px;transform:translateX(-50%);top:4.30px;font-size:26px;font-weight:700;color:#2d62f0;">00</div>
<div class="t" style="left:2079px;top:6.00px;font-size:16.4px;font-weight:400;color:#fff;">DocBits</div>
<div class="t" style="left:110px;top:80.60px;font-size:16.6px;font-weight:400;color:#6a6a6a;">Search by name or Id...</div>
<div class="t" style="left:677px;top:80.50px;font-size:15.8px;font-weight:400;color:#666;">30D</div>
<div class="t" style="left:746px;top:80.50px;font-size:15.8px;font-weight:400;color:#666;">90D</div>
<div class="t" style="left:815px;top:80.50px;font-size:15.8px;font-weight:400;color:#666;">180D</div>
<div class="t" style="left:893px;top:80.50px;font-size:15.8px;font-weight:400;color:#666;">365D</div>
<div class="t" style="left:1039px;top:80.50px;font-size:15.8px;font-weight:400;color:#666;">CUSTOM</div>
<div class="t" style="left:971px;top:80.50px;font-size:15.8px;font-weight:400;color:#fff;">ALL</div>
<div class="t" style="left:2208px;top:81.90px;font-size:15.4px;font-weight:700;color:#fff;">Upload</div>
<div class="t" style="left:129px;top:136.80px;font-size:16.9px;font-weight:400;color:#fff;">All documents (228)</div>
<div class="t" style="left:118px;top:191.85px;font-size:15.4px;font-weight:700;color:#777;">ALL</div>
<div class="t" style="left:202.4px;top:191.85px;font-size:15.5px;font-weight:700;color:#777;">INVOICE</div>
<div class="t" style="left:207px;top:242.90px;font-size:15.9px;font-weight:700;color:#666;">Document Name</div>
<div class="t" style="left:413px;top:242.90px;font-size:15.9px;font-weight:700;color:#666;">Pages</div>
<div class="t" style="left:551px;top:242.90px;font-size:15.9px;font-weight:700;color:#666;">Status</div>
<div class="t" style="left:742.6px;top:242.90px;font-size:15.9px;font-weight:700;color:#666;">Imported On</div>
<div class="t" style="left:940px;top:242.90px;font-size:15.9px;font-weight:700;color:#666;">Priority</div>
<div class="t" style="left:1087px;top:242.90px;font-size:15.9px;font-weight:700;color:#666;">Type</div>
<div class="t" style="left:1213.5px;top:242.90px;font-size:15.9px;font-weight:700;color:#666;">Assigned To</div>
<div class="t" style="left:1400px;top:242.90px;font-size:15.9px;font-weight:700;color:#666;">Updated By</div>
<div class="t" style="left:1581px;top:242.90px;font-size:15.9px;font-weight:700;color:#666;">Updated</div>
<div class="t" style="left:1778px;top:242.90px;font-size:15.9px;font-weight:700;color:#666;">ERP Status</div>
<div class="t" style="left:1956px;top:242.90px;font-size:15.9px;font-weight:700;color:#666;">Created By</div>
<div class="t" style="left:2132.5px;top:242.90px;font-size:15.9px;font-weight:700;color:#666;">Actions</div>
<div class="t" style="left:207px;top:296.00px;font-size:16.1px;font-weight:400;color:#2d88ae;">handle_corrupted_file…</div>
<div class="t" style="right:1805.5px;top:296.00px;font-size:16.4px;font-weight:400;color:#6a6a6a;">1</div>
<div class="t" style="left:624.5px;transform:translateX(-50%);top:295.90px;font-size:13.3px;font-weight:700;color:#fff;">Ready for validation</div>
<div class="t" style="left:742.5px;top:296.00px;font-size:16.6px;font-weight:400;color:#6a6a6a;">27.08.2025 13:35:44</div>
<div class="t" style="left:940px;top:296.00px;font-size:16.4px;font-weight:400;color:#6a6a6a;">-</div>
<div class="t" style="left:1087px;top:296.00px;font-size:16.4px;font-weight:400;color:#6a6a6a;">Invoice</div>
<div class="t" style="left:1214px;top:296.00px;font-size:16.9px;font-weight:400;color:#6a6a6a;">Test Polydocs</div>
<div class="t" style="left:1401px;top:296.00px;font-size:16.4px;font-weight:400;color:#6a6a6a;">-</div>
<div class="t" style="left:1581px;top:296.00px;font-size:16.6px;font-weight:400;color:#6a6a6a;">27.08.2025 13:36:04</div>
<div class="t" style="left:1779px;top:296.00px;font-size:16.4px;font-weight:400;color:#6a6a6a;">-</div>
<div class="t" style="left:1956px;top:296.00px;font-size:16.9px;font-weight:400;color:#6a6a6a;">Test Polydocs</div>
<div class="t" style="left:207px;top:344.14px;font-size:16.1px;font-weight:400;color:#2d88ae;">handle_corrupted_file…</div>
<div class="t" style="right:1805.5px;top:344.14px;font-size:16.4px;font-weight:400;color:#6a6a6a;">1</div>
<div class="t" style="left:624.5px;transform:translateX(-50%);top:344.04px;font-size:13.3px;font-weight:700;color:#fff;">Ready for validation</div>
<div class="t" style="left:742.5px;top:344.14px;font-size:16.6px;font-weight:400;color:#6a6a6a;">25.08.2025 21:03:35</div>
<div class="t" style="left:940px;top:344.14px;font-size:16.4px;font-weight:400;color:#6a6a6a;">-</div>
<div class="t" style="left:1087px;top:344.14px;font-size:16.4px;font-weight:400;color:#6a6a6a;">Invoice</div>
<div class="t" style="left:1214px;top:344.14px;font-size:16.9px;font-weight:400;color:#6a6a6a;">Test Polydocs</div>
<div class="t" style="left:1401px;top:344.14px;font-size:16.4px;font-weight:400;color:#6a6a6a;">-</div>
<div class="t" style="left:1581px;top:344.14px;font-size:16.6px;font-weight:400;color:#6a6a6a;">25.08.2025 21:03:50</div>
<div class="t" style="left:1779px;top:344.14px;font-size:16.4px;font-weight:400;color:#6a6a6a;">-</div>
<div class="t" style="left:1956px;top:344.14px;font-size:16.9px;font-weight:400;color:#6a6a6a;">Test Polydocs</div>
<div class="t" style="left:207px;top:392.28px;font-size:16.1px;font-weight:400;color:#2d88ae;">handle_corrupted_file…</div>
<div class="t" style="right:1805.5px;top:392.28px;font-size:16.4px;font-weight:400;color:#6a6a6a;">1</div>
<div class="t" style="left:624.5px;transform:translateX(-50%);top:392.18px;font-size:13.3px;font-weight:700;color:#fff;">Ready for validation</div>
<div class="t" style="left:742.5px;top:392.28px;font-size:16.6px;font-weight:400;color:#6a6a6a;">20.08.2025 13:57:08</div>
<div class="t" style="left:940px;top:392.28px;font-size:16.4px;font-weight:400;color:#6a6a6a;">-</div>
<div class="t" style="left:1087px;top:392.28px;font-size:16.4px;font-weight:400;color:#6a6a6a;">Invoice</div>
<div class="t" style="left:1214px;top:392.28px;font-size:16.9px;font-weight:400;color:#6a6a6a;">Test Polydocs</div>
<div class="t" style="left:1401px;top:392.28px;font-size:16.4px;font-weight:400;color:#6a6a6a;">-</div>
<div class="t" style="left:1581px;top:392.28px;font-size:16.6px;font-weight:400;color:#6a6a6a;">20.08.2025 13:57:21</div>
<div class="t" style="left:1779px;top:392.28px;font-size:16.4px;font-weight:400;color:#6a6a6a;">-</div>
<div class="t" style="left:1956px;top:392.28px;font-size:16.9px;font-weight:400;color:#6a6a6a;">Test Polydocs</div>
<div class="t" style="left:207px;top:440.42px;font-size:16.1px;font-weight:400;color:#2d88ae;">move_email_after_im…</div>
<div class="t" style="right:1805.5px;top:440.42px;font-size:16.4px;font-weight:400;color:#6a6a6a;">1</div>
<div class="t" style="left:624.5px;transform:translateX(-50%);top:440.32px;font-size:13.3px;font-weight:700;color:#fff;">Ready for validation</div>
<div class="t" style="left:742.5px;top:440.42px;font-size:16.6px;font-weight:400;color:#6a6a6a;">20.08.2025 10:56:21</div>
<div class="t" style="left:940px;top:440.42px;font-size:16.4px;font-weight:400;color:#6a6a6a;">-</div>
<div class="t" style="left:1087px;top:440.42px;font-size:16.4px;font-weight:400;color:#6a6a6a;">Invoice</div>
<div class="t" style="left:1214px;top:440.42px;font-size:16.9px;font-weight:400;color:#6a6a6a;">Test Polydocs</div>
<div class="t" style="left:1401px;top:440.42px;font-size:16.4px;font-weight:400;color:#6a6a6a;">-</div>
<div class="t" style="left:1581px;top:440.42px;font-size:16.6px;font-weight:400;color:#6a6a6a;">20.08.2025 10:56:34</div>
<div class="t" style="left:1779px;top:440.42px;font-size:16.4px;font-weight:400;color:#6a6a6a;">-</div>
<div class="t" style="left:1956px;top:440.42px;font-size:16.9px;font-weight:400;color:#6a6a6a;">Test Polydocs</div>
<div class="t" style="left:207px;top:488.56px;font-size:16.1px;font-weight:400;color:#2d88ae;">test_microsoft_client…</div>
<div class="t" style="right:1805.5px;top:488.56px;font-size:16.4px;font-weight:400;color:#6a6a6a;">1</div>
<div class="t" style="left:624.5px;transform:translateX(-50%);top:488.46px;font-size:13.3px;font-weight:700;color:#fff;">Ready for validation</div>
<div class="t" style="left:742.5px;top:488.56px;font-size:16.6px;font-weight:400;color:#6a6a6a;">20.08.2025 10:55:35</div>
<div class="t" style="left:940px;top:488.56px;font-size:16.4px;font-weight:400;color:#6a6a6a;">-</div>
<div class="t" style="left:1087px;top:488.56px;font-size:16.4px;font-weight:400;color:#6a6a6a;">Invoice</div>
<div class="t" style="left:1214px;top:488.56px;font-size:16.9px;font-weight:400;color:#6a6a6a;">Test Polydocs</div>
<div class="t" style="left:1401px;top:488.56px;font-size:16.4px;font-weight:400;color:#6a6a6a;">-</div>
<div class="t" style="left:1581px;top:488.56px;font-size:16.6px;font-weight:400;color:#6a6a6a;">20.08.2025 10:55:49</div>
<div class="t" style="left:1779px;top:488.56px;font-size:16.4px;font-weight:400;color:#6a6a6a;">-</div>
<div class="t" style="left:1956px;top:488.56px;font-size:16.9px;font-weight:400;color:#6a6a6a;">Test Polydocs</div>
<div class="t" style="left:207px;top:536.70px;font-size:16.1px;font-weight:400;color:#2d88ae;">multi_document_with…</div>
<div class="t" style="right:1805.5px;top:536.70px;font-size:16.4px;font-weight:400;color:#6a6a6a;">1</div>
<div class="t" style="left:624.5px;transform:translateX(-50%);top:536.60px;font-size:13.3px;font-weight:700;color:#fff;">Ready for validation</div>
<div class="t" style="left:742.5px;top:536.70px;font-size:16.6px;font-weight:400;color:#6a6a6a;">20.08.2025 10:55:10</div>
<div class="t" style="left:940px;top:536.70px;font-size:16.4px;font-weight:400;color:#6a6a6a;">-</div>
<div class="t" style="left:1087px;top:536.70px;font-size:16.4px;font-weight:400;color:#6a6a6a;">Invoice</div>
<div class="t" style="left:1214px;top:536.70px;font-size:16.9px;font-weight:400;color:#6a6a6a;">Test Polydocs</div>
<div class="t" style="left:1401px;top:536.70px;font-size:16.4px;font-weight:400;color:#6a6a6a;">-</div>
<div class="t" style="left:1581px;top:536.70px;font-size:16.6px;font-weight:400;color:#6a6a6a;">20.08.2025 10:55:26</div>
<div class="t" style="left:1779px;top:536.70px;font-size:16.4px;font-weight:400;color:#6a6a6a;">-</div>
<div class="t" style="left:1956px;top:536.70px;font-size:16.9px;font-weight:400;color:#6a6a6a;">Test Polydocs</div>
<div class="t" style="left:207px;top:584.84px;font-size:16.1px;font-weight:400;color:#2d88ae;">import_single_email_…</div>
<div class="t" style="right:1805.5px;top:584.84px;font-size:16.4px;font-weight:400;color:#6a6a6a;">1</div>
<div class="t" style="left:624.5px;transform:translateX(-50%);top:584.74px;font-size:13.3px;font-weight:700;color:#fff;">Ready for validation</div>
<div class="t" style="left:742.5px;top:584.84px;font-size:16.6px;font-weight:400;color:#6a6a6a;">20.08.2025 10:54:49</div>
<div class="t" style="left:940px;top:584.84px;font-size:16.4px;font-weight:400;color:#6a6a6a;">-</div>
<div class="t" style="left:1087px;top:584.84px;font-size:16.4px;font-weight:400;color:#6a6a6a;">Invoice</div>
<div class="t" style="left:1214px;top:584.84px;font-size:16.9px;font-weight:400;color:#6a6a6a;">Test Polydocs</div>
<div class="t" style="left:1401px;top:584.84px;font-size:16.4px;font-weight:400;color:#6a6a6a;">-</div>
<div class="t" style="left:1581px;top:584.84px;font-size:16.6px;font-weight:400;color:#6a6a6a;">20.08.2025 10:55:05</div>
<div class="t" style="left:1779px;top:584.84px;font-size:16.4px;font-weight:400;color:#6a6a6a;">-</div>
<div class="t" style="left:1956px;top:584.84px;font-size:16.9px;font-weight:400;color:#6a6a6a;">Test Polydocs</div>
<div class="t" style="left:207px;top:632.98px;font-size:16.1px;font-weight:400;color:#2d88ae;">multi_document_test…</div>
<div class="t" style="right:1805.5px;top:632.98px;font-size:16.4px;font-weight:400;color:#6a6a6a;">1</div>
<div class="t" style="left:624.5px;transform:translateX(-50%);top:632.88px;font-size:13.3px;font-weight:700;color:#fff;">Ready for validation</div>
<div class="t" style="left:742.5px;top:632.98px;font-size:16.6px;font-weight:400;color:#6a6a6a;">20.08.2025 10:54:29</div>
<div class="t" style="left:940px;top:632.98px;font-size:16.4px;font-weight:400;color:#6a6a6a;">-</div>
<div class="t" style="left:1087px;top:632.98px;font-size:16.4px;font-weight:400;color:#6a6a6a;">Invoice</div>
<div class="t" style="left:1214px;top:632.98px;font-size:16.9px;font-weight:400;color:#6a6a6a;">Test Polydocs</div>
<div class="t" style="left:1401px;top:632.98px;font-size:16.4px;font-weight:400;color:#6a6a6a;">-</div>
<div class="t" style="left:1581px;top:632.98px;font-size:16.6px;font-weight:400;color:#6a6a6a;">20.08.2025 10:54:47</div>
<div class="t" style="left:1779px;top:632.98px;font-size:16.4px;font-weight:400;color:#6a6a6a;">-</div>
<div class="t" style="left:1956px;top:632.98px;font-size:16.9px;font-weight:400;color:#6a6a6a;">Test Polydocs</div>
<div class="t" style="left:207px;top:681.12px;font-size:16.1px;font-weight:400;color:#2d88ae;">multi_document_test…</div>
<div class="t" style="right:1805.5px;top:681.12px;font-size:16.4px;font-weight:400;color:#6a6a6a;">1</div>
<div class="t" style="left:624.5px;transform:translateX(-50%);top:681.02px;font-size:13.3px;font-weight:700;color:#fff;">Ready for validation</div>
<div class="t" style="left:742.5px;top:681.12px;font-size:16.6px;font-weight:400;color:#6a6a6a;">20.08.2025 10:54:28</div>
<div class="t" style="left:940px;top:681.12px;font-size:16.4px;font-weight:400;color:#6a6a6a;">-</div>
<div class="t" style="left:1087px;top:681.12px;font-size:16.4px;font-weight:400;color:#6a6a6a;">Invoice</div>
<div class="t" style="left:1214px;top:681.12px;font-size:16.9px;font-weight:400;color:#6a6a6a;">Test Polydocs</div>
<div class="t" style="left:1401px;top:681.12px;font-size:16.4px;font-weight:400;color:#6a6a6a;">-</div>
<div class="t" style="left:1581px;top:681.12px;font-size:16.6px;font-weight:400;color:#6a6a6a;">20.08.2025 10:54:46</div>
<div class="t" style="left:1779px;top:681.12px;font-size:16.4px;font-weight:400;color:#6a6a6a;">-</div>
<div class="t" style="left:1956px;top:681.12px;font-size:16.9px;font-weight:400;color:#6a6a6a;">Test Polydocs</div>
<div class="t" style="left:207px;top:729.26px;font-size:16.1px;font-weight:400;color:#2d88ae;">testfile.pdf</div>
<div class="t" style="right:1805.5px;top:729.26px;font-size:16.4px;font-weight:400;color:#6a6a6a;">1</div>
<div class="t" style="left:624.5px;transform:translateX(-50%);top:729.16px;font-size:13.3px;font-weight:700;color:#fff;">Ready for validation</div>
<div class="t" style="left:742.5px;top:729.26px;font-size:16.6px;font-weight:400;color:#6a6a6a;">20.08.2025 10:54:03</div>
<div class="t" style="left:940px;top:729.26px;font-size:16.4px;font-weight:400;color:#6a6a6a;">-</div>
<div class="t" style="left:1087px;top:729.26px;font-size:16.4px;font-weight:400;color:#6a6a6a;">Invoice</div>
<div class="t" style="left:1214px;top:729.26px;font-size:16.9px;font-weight:400;color:#6a6a6a;">Test Polydocs</div>
<div class="t" style="left:1401px;top:729.26px;font-size:16.4px;font-weight:400;color:#6a6a6a;">-</div>
<div class="t" style="left:1581px;top:729.26px;font-size:16.6px;font-weight:400;color:#6a6a6a;">20.08.2025 10:54:21</div>
<div class="t" style="left:1779px;top:729.26px;font-size:16.4px;font-weight:400;color:#6a6a6a;">-</div>
<div class="t" style="left:1956px;top:729.26px;font-size:16.9px;font-weight:400;color:#6a6a6a;">Test Polydocs</div>
<div class="t" style="left:207px;top:777.40px;font-size:16.1px;font-weight:400;color:#2d88ae;">multi_document_with…</div>
<div class="t" style="right:1805.5px;top:777.40px;font-size:16.4px;font-weight:400;color:#6a6a6a;">1</div>
<div class="t" style="left:624.5px;transform:translateX(-50%);top:777.30px;font-size:13.3px;font-weight:700;color:#fff;">Ready for validation</div>
<div class="t" style="left:742.5px;top:777.40px;font-size:16.6px;font-weight:400;color:#6a6a6a;">20.08.2025 10:53:12</div>
<div class="t" style="left:940px;top:777.40px;font-size:16.4px;font-weight:400;color:#6a6a6a;">-</div>
<div class="t" style="left:1087px;top:777.40px;font-size:16.4px;font-weight:400;color:#6a6a6a;">Invoice</div>
<div class="t" style="left:1214px;top:777.40px;font-size:16.9px;font-weight:400;color:#6a6a6a;">Test Polydocs</div>
<div class="t" style="left:1401px;top:777.40px;font-size:16.4px;font-weight:400;color:#6a6a6a;">-</div>
<div class="t" style="left:1581px;top:777.40px;font-size:16.6px;font-weight:400;color:#6a6a6a;">20.08.2025 10:53:24</div>
<div class="t" style="left:1779px;top:777.40px;font-size:16.4px;font-weight:400;color:#6a6a6a;">-</div>
<div class="t" style="left:1956px;top:777.40px;font-size:16.9px;font-weight:400;color:#6a6a6a;">Test Polydocs</div>
<div class="t" style="left:207px;top:825.54px;font-size:16.1px;font-weight:400;color:#2d88ae;">corrupted_document…</div>
<div class="t" style="right:1805.5px;top:825.54px;font-size:16.4px;font-weight:400;color:#6a6a6a;">1</div>
<div class="t" style="left:624.5px;transform:translateX(-50%);top:825.44px;font-size:13.3px;font-weight:700;color:#fff;">Ready for validation</div>
<div class="t" style="left:742.5px;top:825.54px;font-size:16.6px;font-weight:400;color:#6a6a6a;">20.08.2025 10:52:53</div>
<div class="t" style="left:940px;top:825.54px;font-size:16.4px;font-weight:400;color:#6a6a6a;">-</div>
<div class="t" style="left:1087px;top:825.54px;font-size:16.4px;font-weight:400;color:#6a6a6a;">Invoice</div>
<div class="t" style="left:1214px;top:825.54px;font-size:16.9px;font-weight:400;color:#6a6a6a;">Test Polydocs</div>
<div class="t" style="left:1401px;top:825.54px;font-size:16.4px;font-weight:400;color:#6a6a6a;">-</div>
<div class="t" style="left:1581px;top:825.54px;font-size:16.6px;font-weight:400;color:#6a6a6a;">20.08.2025 10:53:07</div>
<div class="t" style="left:1779px;top:825.54px;font-size:16.4px;font-weight:400;color:#6a6a6a;">-</div>
<div class="t" style="left:1956px;top:825.54px;font-size:16.9px;font-weight:400;color:#6a6a6a;">Test Polydocs</div>
<div class="t" style="left:207px;top:873.68px;font-size:16.1px;font-weight:400;color:#2d88ae;">handle_corrupted_file…</div>
<div class="t" style="right:1805.5px;top:873.68px;font-size:16.4px;font-weight:400;color:#6a6a6a;">1</div>
<div class="t" style="left:624.5px;transform:translateX(-50%);top:873.58px;font-size:13.3px;font-weight:700;color:#fff;">Ready for validation</div>
<div class="t" style="left:742.5px;top:873.68px;font-size:16.6px;font-weight:400;color:#6a6a6a;">20.08.2025 10:52:37</div>
<div class="t" style="left:940px;top:873.68px;font-size:16.4px;font-weight:400;color:#6a6a6a;">-</div>
<div class="t" style="left:1087px;top:873.68px;font-size:16.4px;font-weight:400;color:#6a6a6a;">Invoice</div>
<div class="t" style="left:1214px;top:873.68px;font-size:16.9px;font-weight:400;color:#6a6a6a;">Test Polydocs</div>
<div class="t" style="left:1401px;top:873.68px;font-size:16.4px;font-weight:400;color:#6a6a6a;">-</div>
<div class="t" style="left:1581px;top:873.68px;font-size:16.6px;font-weight:400;color:#6a6a6a;">20.08.2025 10:52:50</div>
<div class="t" style="left:1779px;top:873.68px;font-size:16.4px;font-weight:400;color:#6a6a6a;">-</div>
<div class="t" style="left:1956px;top:873.68px;font-size:16.9px;font-weight:400;color:#6a6a6a;">Test Polydocs</div>
<div class="t" style="left:207px;top:921.82px;font-size:16.1px;font-weight:400;color:#2d88ae;">move_email_after_im…</div>
<div class="t" style="right:1805.5px;top:921.82px;font-size:16.4px;font-weight:400;color:#6a6a6a;">1</div>
<div class="t" style="left:624.5px;transform:translateX(-50%);top:921.72px;font-size:13.3px;font-weight:700;color:#fff;">Ready for validation</div>
<div class="t" style="left:742.5px;top:921.82px;font-size:16.6px;font-weight:400;color:#6a6a6a;">20.08.2025 10:52:15</div>
<div class="t" style="left:940px;top:921.82px;font-size:16.4px;font-weight:400;color:#6a6a6a;">-</div>
<div class="t" style="left:1087px;top:921.82px;font-size:16.4px;font-weight:400;color:#6a6a6a;">Invoice</div>
<div class="t" style="left:1214px;top:921.82px;font-size:16.9px;font-weight:400;color:#6a6a6a;">Test Polydocs</div>
<div class="t" style="left:1401px;top:921.82px;font-size:16.4px;font-weight:400;color:#6a6a6a;">-</div>
<div class="t" style="left:1581px;top:921.82px;font-size:16.6px;font-weight:400;color:#6a6a6a;">20.08.2025 10:52:29</div>
<div class="t" style="left:1779px;top:921.82px;font-size:16.4px;font-weight:400;color:#6a6a6a;">-</div>
<div class="t" style="left:1956px;top:921.82px;font-size:16.9px;font-weight:400;color:#6a6a6a;">Test Polydocs</div>
<div class="t" style="left:207px;top:969.96px;font-size:16.1px;font-weight:400;color:#2d88ae;">test_google_client_20…</div>
<div class="t" style="right:1805.5px;top:969.96px;font-size:16.4px;font-weight:400;color:#6a6a6a;">1</div>
<div class="t" style="left:624.5px;transform:translateX(-50%);top:969.86px;font-size:13.3px;font-weight:700;color:#fff;">Ready for validation</div>
<div class="t" style="left:742.5px;top:969.96px;font-size:16.6px;font-weight:400;color:#6a6a6a;">20.08.2025 10:52:13</div>
<div class="t" style="left:940px;top:969.96px;font-size:16.4px;font-weight:400;color:#6a6a6a;">-</div>
<div class="t" style="left:1087px;top:969.96px;font-size:16.4px;font-weight:400;color:#6a6a6a;">Invoice</div>
<div class="t" style="left:1214px;top:969.96px;font-size:16.9px;font-weight:400;color:#6a6a6a;">Test Polydocs</div>
<div class="t" style="left:1401px;top:969.96px;font-size:16.4px;font-weight:400;color:#6a6a6a;">-</div>
<div class="t" style="left:1581px;top:969.96px;font-size:16.6px;font-weight:400;color:#6a6a6a;">20.08.2025 10:52:29</div>
<div class="t" style="left:1779px;top:969.96px;font-size:16.4px;font-weight:400;color:#6a6a6a;">-</div>
<div class="t" style="left:1956px;top:969.96px;font-size:16.9px;font-weight:400;color:#6a6a6a;">Test Polydocs</div>
<div class="t" style="left:207px;top:1018.10px;font-size:16.1px;font-weight:400;color:#2d88ae;">test_microsoft_client…</div>
<div class="t" style="right:1805.5px;top:1018.10px;font-size:16.4px;font-weight:400;color:#6a6a6a;">1</div>
<div class="t" style="left:624.5px;transform:translateX(-50%);top:1018.00px;font-size:13.3px;font-weight:700;color:#fff;">Ready for validation</div>
<div class="t" style="left:742.5px;top:1018.10px;font-size:16.6px;font-weight:400;color:#6a6a6a;">20.08.2025 10:51:53</div>
<div class="t" style="left:940px;top:1018.10px;font-size:16.4px;font-weight:400;color:#6a6a6a;">-</div>
<div class="t" style="left:1087px;top:1018.10px;font-size:16.4px;font-weight:400;color:#6a6a6a;">Invoice</div>
<div class="t" style="left:1214px;top:1018.10px;font-size:16.9px;font-weight:400;color:#6a6a6a;">Test Polydocs</div>
<div class="t" style="left:1401px;top:1018.10px;font-size:16.4px;font-weight:400;color:#6a6a6a;">-</div>
<div class="t" style="left:1581px;top:1018.10px;font-size:16.6px;font-weight:400;color:#6a6a6a;">20.08.2025 10:52:11</div>
<div class="t" style="left:1779px;top:1018.10px;font-size:16.4px;font-weight:400;color:#6a6a6a;">-</div>
<div class="t" style="left:1956px;top:1018.10px;font-size:16.9px;font-weight:400;color:#6a6a6a;">Test Polydocs</div>
<div class="t" style="left:1795.5px;top:1063.75px;font-size:16.4px;font-weight:400;color:#666;">Documents per Page:</div>
<div class="t" style="left:1966px;top:1063.75px;font-size:16.6px;font-weight:400;color:#222;">50</div>
<div class="t" style="left:2160.5px;transform:translateX(-50%);top:1064.00px;font-size:16.6px;font-weight:400;color:#555;">1 / 5</div>
</div>
</body></html>
